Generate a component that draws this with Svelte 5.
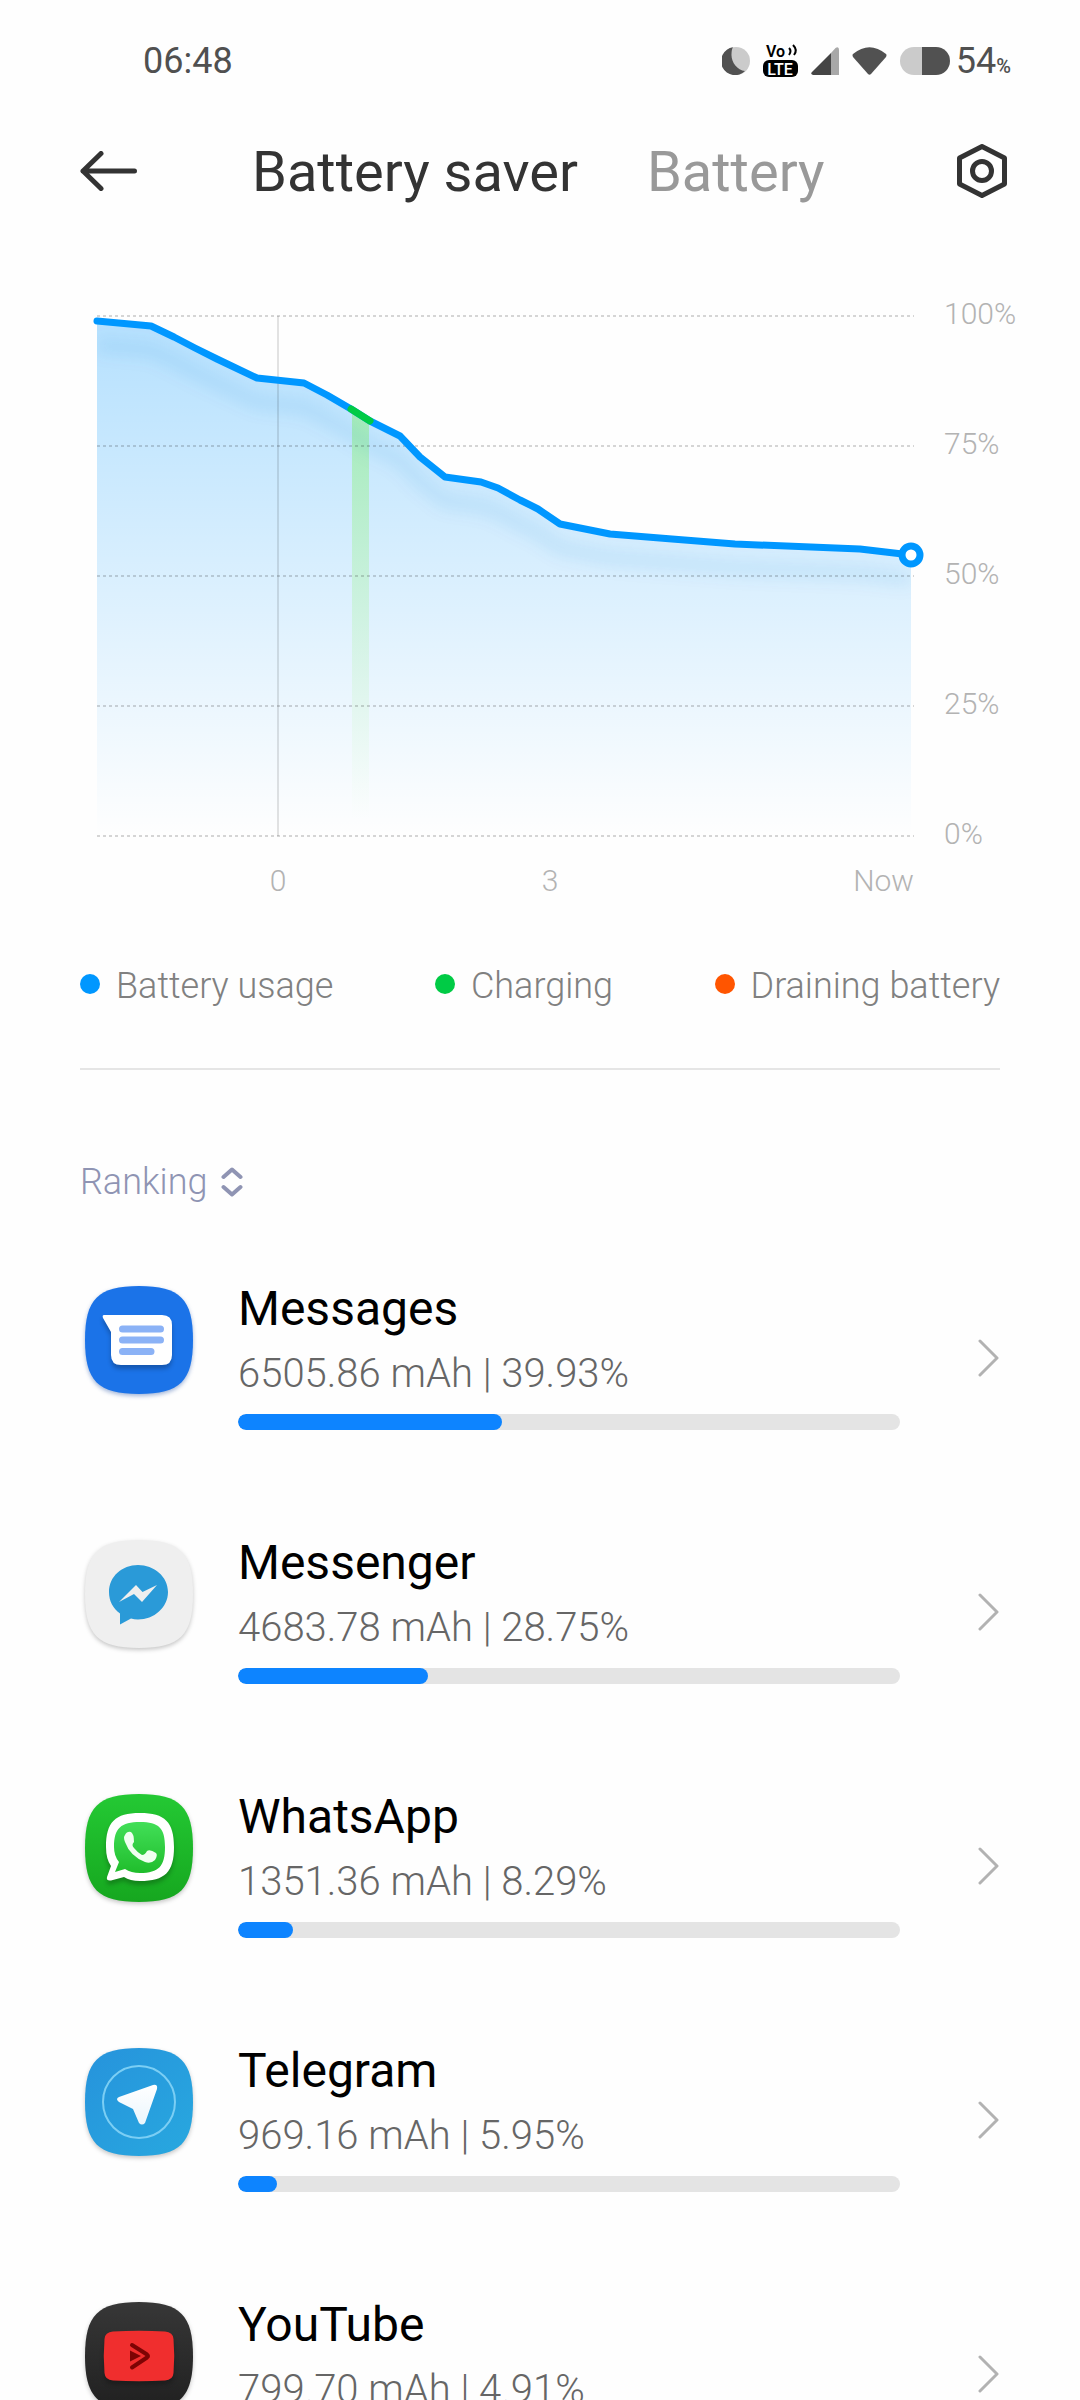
<script>
  const apps = [
    { id: 'messages', name: 'Messages', usage: '6505.86 mAh', percent: 39.93 },
    { id: 'messenger', name: 'Messenger', usage: '4683.78 mAh', percent: 28.75 },
    { id: 'whatsapp', name: 'WhatsApp', usage: '1351.36 mAh', percent: 8.29 },
    { id: 'telegram', name: 'Telegram', usage: '969.16 mAh', percent: 5.95 },
    { id: 'youtube', name: 'YouTube', usage: '799.70 mAh', percent: 4.91 },
  ];

  const legend = [
    { label: 'Battery usage', tone: 'usage' },
    { label: 'Charging', tone: 'charging' },
    { label: 'Draining battery', tone: 'draining' },
  ];

  const points = [
    [97, 321], [151, 326], [174, 337], [195, 348], [217, 359], [257, 378],
    [304, 383], [327, 395], [351, 409], [370, 421], [400, 436], [420, 457],
    [445, 477], [481, 482], [498, 488], [520, 500], [538, 509], [560, 524],
    [610, 534], [672, 539], [735, 544], [860, 549], [911, 555],
  ];
  const line = 'M' + points.map((p) => p.join(' ')).join('L');
  const area = line + 'L911 836L97 836Z';
  const grid = [100, 75, 50, 25, 0].map((value) => ({ value, y: 836 - value * 5.2 }));
  const squircle = 'M54 0C95 0 108 13 108 54S95 108 54 108S0 95 0 54S13 0 54 0Z';
</script>

<div class="screen">
  <div class="status">
    <span class="time">06:48</span>
    <div class="indicators">
      <div class="glyphs">
        <svg width="28" height="28" viewBox="0 0 28 28" aria-hidden="true">
          <circle cx="14" cy="14" r="14" fill="#cbcbcb" />
          <path d="M11 .3A14 14 0 1 0 23 24C15 23 9 15 9.500 7C9.600 4 10 2 11 .3Z" fill="#515151" />
        </svg>
        <svg class="volte" width="35" height="34" viewBox="0 0 35 34" aria-hidden="true">
          <text x="3" y="13" class="vo">Vo</text>
          <path d="M26 4q3 3 0 7M30 1q5 5 1 10" fill="none" stroke="#000" stroke-width="2" />
          <rect y="16" width="35" height="17" rx="6" />
          <text x="17" y="31" class="lte">LTE</text>
        </svg>
        <svg width="28" height="28" viewBox="0 0 28 28" aria-hidden="true">
          <path d="M20 6L24.500 1Q28 -1 28 3V28H20Z" fill="#a8a8a8" />
          <path d="M20 6V28H2Q-1 27 1 25Z" fill="#454545" />
        </svg>
        <svg width="35" height="28" viewBox="0 0 35 28" aria-hidden="true">
          <path d="M1 7Q17.500 -6.500 34 7Q35 8 34 10L19 27Q17.500 28.500 16 27L1 10Q0 8 1 7Z" fill="#515151" />
        </svg>
        <svg width="50" height="28" viewBox="0 0 50 28" aria-hidden="true">
          <path d="M22 0H14a14 14 0 0 0 0 28h8Z" fill="#cbcbcb" />
          <path d="M22 0H36a14 14 0 0 1 0 28H22Z" fill="#515151" />
        </svg>
      </div>
      <span class="level">54<small>%</small></span>
    </div>
  </div>

  <header>
    <button class="icon-button" aria-label="Back">
      <svg width="57" height="40" viewBox="0 0 57 40">
        <path d="M21 2.500L3 20L21 37.500M3 20H54.500" fill="none" stroke="#333" stroke-width="5" stroke-linecap="round" stroke-linejoin="round" />
      </svg>
    </button>
    <nav>
      <a href="#saver" class="active" aria-current="page">Battery saver</a>
      <a href="#battery">Battery</a>
    </nav>
    <button class="icon-button" aria-label="Settings">
      <svg width="50" height="54" viewBox="0 0 50 54">
        <path d="M25 2.500L47.500 14V40L25 51.500L2.500 40V14Z" fill="none" stroke="#333" stroke-width="5" stroke-linejoin="round" />
        <circle cx="25" cy="27" r="9.500" fill="none" stroke="#333" stroke-width="5" />
      </svg>
    </button>
  </header>

  <main>
    <svg class="chart" viewBox="0 290 1080 620" role="img" aria-label="Battery level over time">
      <defs>
        <linearGradient id="fade" gradientUnits="userSpaceOnUse" x1="0" y1="316" x2="0" y2="836">
          <stop offset="0" stop-color="#0097ff" stop-opacity=".29" />
          <stop offset="1" stop-color="#0097ff" stop-opacity="0" />
        </linearGradient>
        <linearGradient id="charge" gradientUnits="userSpaceOnUse" x1="0" y1="410" x2="0" y2="820">
          <stop offset="0" stop-color="#a3ebb8" />
          <stop offset="1" stop-color="#d9fbd0" stop-opacity="0" />
        </linearGradient>
        <filter id="soften" filterUnits="userSpaceOnUse" x="60" y="290" width="900" height="400">
          <feGaussianBlur stdDeviation="8" />
        </filter>
        <clipPath id="under"><path d={area} /></clipPath>
      </defs>
      <path d={area} fill="url(#fade)" />
      <path d="M352 410L369 420V836H352Z" fill="url(#charge)" />
      <g clip-path="url(#under)">
        <path d={line} transform="translate(0 24)" fill="none" stroke="#0078d0" stroke-opacity=".1" stroke-width="14" filter="url(#soften)" />
      </g>
      {#each grid as g}
        <line x1="97" x2="914" y1={g.y} y2={g.y} stroke="#000" stroke-opacity=".16" stroke-width="2" stroke-dasharray="3 3" />
        <text x="944" y={g.y + 8}>{g.value}%</text>
      {/each}
      <line x1="278" x2="278" y1="316" y2="836" stroke="#000" stroke-opacity=".11" stroke-width="2" />
      <path d={line} fill="none" stroke="#0097ff" stroke-width="7" stroke-linejoin="round" stroke-linecap="round" />
      <path d="M351 409L370 421" stroke="#00cb45" stroke-width="7" stroke-linecap="round" />
      <circle cx="911" cy="555" r="9" fill="#fff" stroke="#0097ff" stroke-width="7" />
      <text x="278" y="891" text-anchor="middle">0</text>
      <text x="550" y="891" text-anchor="middle">3</text>
      <text x="914" y="891" text-anchor="end">Now</text>
    </svg>

    <ul class="legend">
      {#each legend as item}
        <li><span class="dot {item.tone}"></span>{item.label}</li>
      {/each}
    </ul>

    <button class="ranking">
      Ranking
      <svg width="22" height="30" viewBox="0 0 22 30" aria-hidden="true">
        <path d="M2.500 10L11 2.500L19.500 10M2.500 20L11 27.500L19.500 20" fill="none" stroke="#8f94b3" stroke-width="4" stroke-linecap="round" stroke-linejoin="round" />
      </svg>
    </button>

    <ul class="apps">
      {#each apps as app}
        <li>
          <a class="row" href={'#' + app.id}>
            <svg class="app-icon {app.id}" width="108" height="108" viewBox="0 0 108 108" aria-hidden="true">
              {#if app.id === 'messages'}
                <path d={squircle} fill="#1b73e8" />
                <path class="raised" d="M19 29H77Q87 29 87 39V69Q87 79 77 79H36Q26 79 26 69V46L18 32Q17 29 19 29Z" fill="#fff" />
                <path d="M37.500 43H75.500M37.500 54H75.500M37.500 65.500H66" stroke="#8bb2f6" stroke-width="7" stroke-linecap="round" />
              {:else if app.id === 'messenger'}
                <path d={squircle} fill="#efefef" />
                <path d="M53 25C69 25 83 36.500 83 52S69 79.500 53 79.500Q49 79.500 46 78.500L35 84.500V73.500C28 68.500 24 61 24 52C24 36.500 37 25 53 25Z" fill="#2a9ad8" />
                <path d="M34 62L51 45L57.500 52L72 45L57 62L49 54Z" fill="#efefef" />
              {:else if app.id === 'whatsapp'}
                <defs>
                  <linearGradient id="wa-back" x2="0" y2="1"><stop stop-color="#24c934" /><stop offset="1" stop-color="#16a71f" /></linearGradient>
                  <linearGradient id="wa-bubble" x2="0" y2="1"><stop stop-color="#42df58" /><stop offset="1" stop-color="#20bd2c" /></linearGradient>
                </defs>
                <path d={squircle} fill="url(#wa-back)" />
                <path class="raised" d="M55 19C80 19 89 28 89 53S80 87 55 87Q45 87 39 83L26 86.500Q21 87 22 83L26 72Q21 65 21 53C21 28 30 19 55 19Z" fill="#fff" />
                <path d="M55 28C74 28 80 34 80 53S74 79 55 79Q46 79 40 75L30 78L34 68Q29 62 29 53C29 34 36 28 55 28Z" fill="url(#wa-bubble)" />
                <path d="M40 41Q42 37 46 38Q49 40 49 48Q46 51 49 54Q53 59 57 61Q60 61 62 57Q65 55 71 59Q73 61 70 66Q66 70 60 68Q45 62 40 48Q38 43 40 41Z" fill="#f0fff0" />
              {:else if app.id === 'telegram'}
                <defs>
                  <linearGradient id="tg-back" x2="1" y2="1"><stop stop-color="#2693dc" /><stop offset="1" stop-color="#28a8df" /></linearGradient>
                  <linearGradient id="tg-plane" x2="0" y2="1"><stop stop-color="#fff" /><stop offset="1" stop-color="#eaf6fd" /></linearGradient>
                </defs>
                <path d={squircle} fill="url(#tg-back)" />
                <circle cx="54" cy="54" r="36" fill="none" stroke="#7bcef4" stroke-width="2" />
                <path d="M34 49L68 37Q73 36 72 41L60 75Q57 78 54 75L48 61L34 54Q30 51 34 49Z" fill="url(#tg-plane)" />
              {:else}
                <defs>
                  <linearGradient id="yt-back" x2="0" y2="1"><stop stop-color="#373737" /><stop offset="1" stop-color="#202020" /></linearGradient>
                </defs>
                <path d={squircle} fill="url(#yt-back)" />
                <path class="raised" d="M28 29.500Q54 28 80 29.500Q88 30 88.500 37Q90 54 88.500 71Q88 78 80 78.500Q54 80 28 78.500Q20 78 19.500 71Q18 54 19.500 37Q20 30 28 29.500Z" fill="#f02e2e" />
                <path d="M47 43L62 52.500Q64 54 62 55.500L47 65.500" fill="none" stroke="#7d0404" stroke-width="4" stroke-linecap="round" />
                <path d="M45 48.500L56 54L45 59.500Z" fill="#7d0404" />
              {/if}
            </svg>
            <div class="details">
              <h2>{app.name}</h2>
              <p>{app.usage} | {app.percent}%</p>
              <div class="track"><div class="fill" style:width="{app.percent}%"></div></div>
            </div>
            <svg class="chevron" width="22" height="38" viewBox="0 0 22 38" aria-hidden="true">
              <path d="M2 2L19 19L2 36" fill="none" stroke="#b2b2b2" stroke-width="3" stroke-linecap="round" stroke-linejoin="round" />
            </svg>
          </a>
        </li>
      {/each}
    </ul>
  </main>
</div>

<style>
  :global(body) {
    margin: 0;
    background: #fefefe;
  }
  .screen {
    height: 100vh;
    overflow: hidden auto;
    scrollbar-width: none;
    font-family: Roboto, 'Liberation Sans', sans-serif;
    font-weight: 300;
    color: #333;
  }
  svg {
    display: block;
    flex: none;
  }
  button {
    border: 0;
    padding: 0;
    background: none;
    font: inherit;
    cursor: pointer;
  }
  a {
    text-decoration: none;
    color: inherit;
  }
  ul {
    list-style: none;
    margin: 0;
    padding: 0;
  }
  .status {
    display: flex;
    justify-content: space-between;
    align-items: center;
    height: 121px;
    padding: 0 69px 0 143px;
    font-size: 36px;
    font-weight: 400;
    color: #505050;
  }
  .indicators {
    display: flex;
    align-items: center;
    gap: 6px;
  }
  .glyphs {
    display: flex;
    align-items: center;
    gap: 13px;
  }
  .level small {
    font-size: 20px;
    font-weight: 500;
  }
  .volte {
    overflow: visible;
  }
  .vo {
    font-size: 16px;
    font-weight: 600;
  }
  .lte {
    font-size: 16px;
    font-weight: 500;
    fill: #fff;
    text-anchor: middle;
  }
  header {
    display: flex;
    align-items: center;
    height: 100px;
    padding: 0 73px 0 80px;
  }
  nav {
    display: flex;
    flex: 1;
    gap: 69px;
    margin-left: 115px;
    padding-top: 2px;
    font-size: 56px;
    font-weight: 400;
    line-height: 66px;
    color: #999;
  }
  .chart {
    width: 100%;
    height: auto;
    margin-top: 69px;
  }
  .active {
    color: #333;
  }
  .chart text {
    font-size: 30px;
    fill: #b3b3b3;
  }
  .legend {
    display: flex;
    justify-content: space-between;
    margin: 0 80px;
    padding: 54px 0 60px;
    border-bottom: 2px solid #e5e5e5;
    font-size: 36px;
    line-height: 44px;
    color: #808080;
  }
  .legend li {
    display: flex;
    align-items: center;
    gap: 16px;
  }
  .dot {
    width: 20px;
    height: 20px;
    margin-bottom: 4px;
    border-radius: 50%;
  }
  .usage {
    background: #0097ff;
  }
  .charging {
    background: #00cb45;
  }
  .draining {
    background: #ff5500;
  }
  .ranking {
    display: flex;
    align-items: center;
    gap: 14px;
    margin: 90px 80px 24px;
    font-size: 36px;
    line-height: 44px;
    color: #8f94b3;
  }
  .row {
    display: flex;
    align-items: center;
    padding: 53px 80px 52px 85px;
  }
  .app-icon {
    align-self: flex-start;
    margin-top: 5px;
    overflow: visible;
    filter: drop-shadow(0 2px 2px rgb(0 0 0 / 0.22));
  }
  .app-icon.messages {
    filter: drop-shadow(0 2px 2px rgb(20 70 160 / 0.4));
  }
  .raised {
    filter: drop-shadow(0 4px 2px rgb(0 0 0 / 0.24));
  }
  .details {
    flex: 1;
    margin: 0 78px 0 45px;
  }
  h2 {
    margin: 0;
    font-size: 48px;
    font-weight: 400;
    line-height: 56px;
    color: #000;
  }
  p {
    margin: 13px 0 16px;
    font-size: 40px;
    line-height: 48px;
    color: #666;
  }
  .track {
    height: 16px;
    border-radius: 8px;
    background: #e4e4e4;
    overflow: hidden;
  }
  .fill {
    height: 100%;
    border-radius: 8px;
    background: #0d84ff;
  }
  .chevron {
    margin-top: 4px;
  }
</style>
